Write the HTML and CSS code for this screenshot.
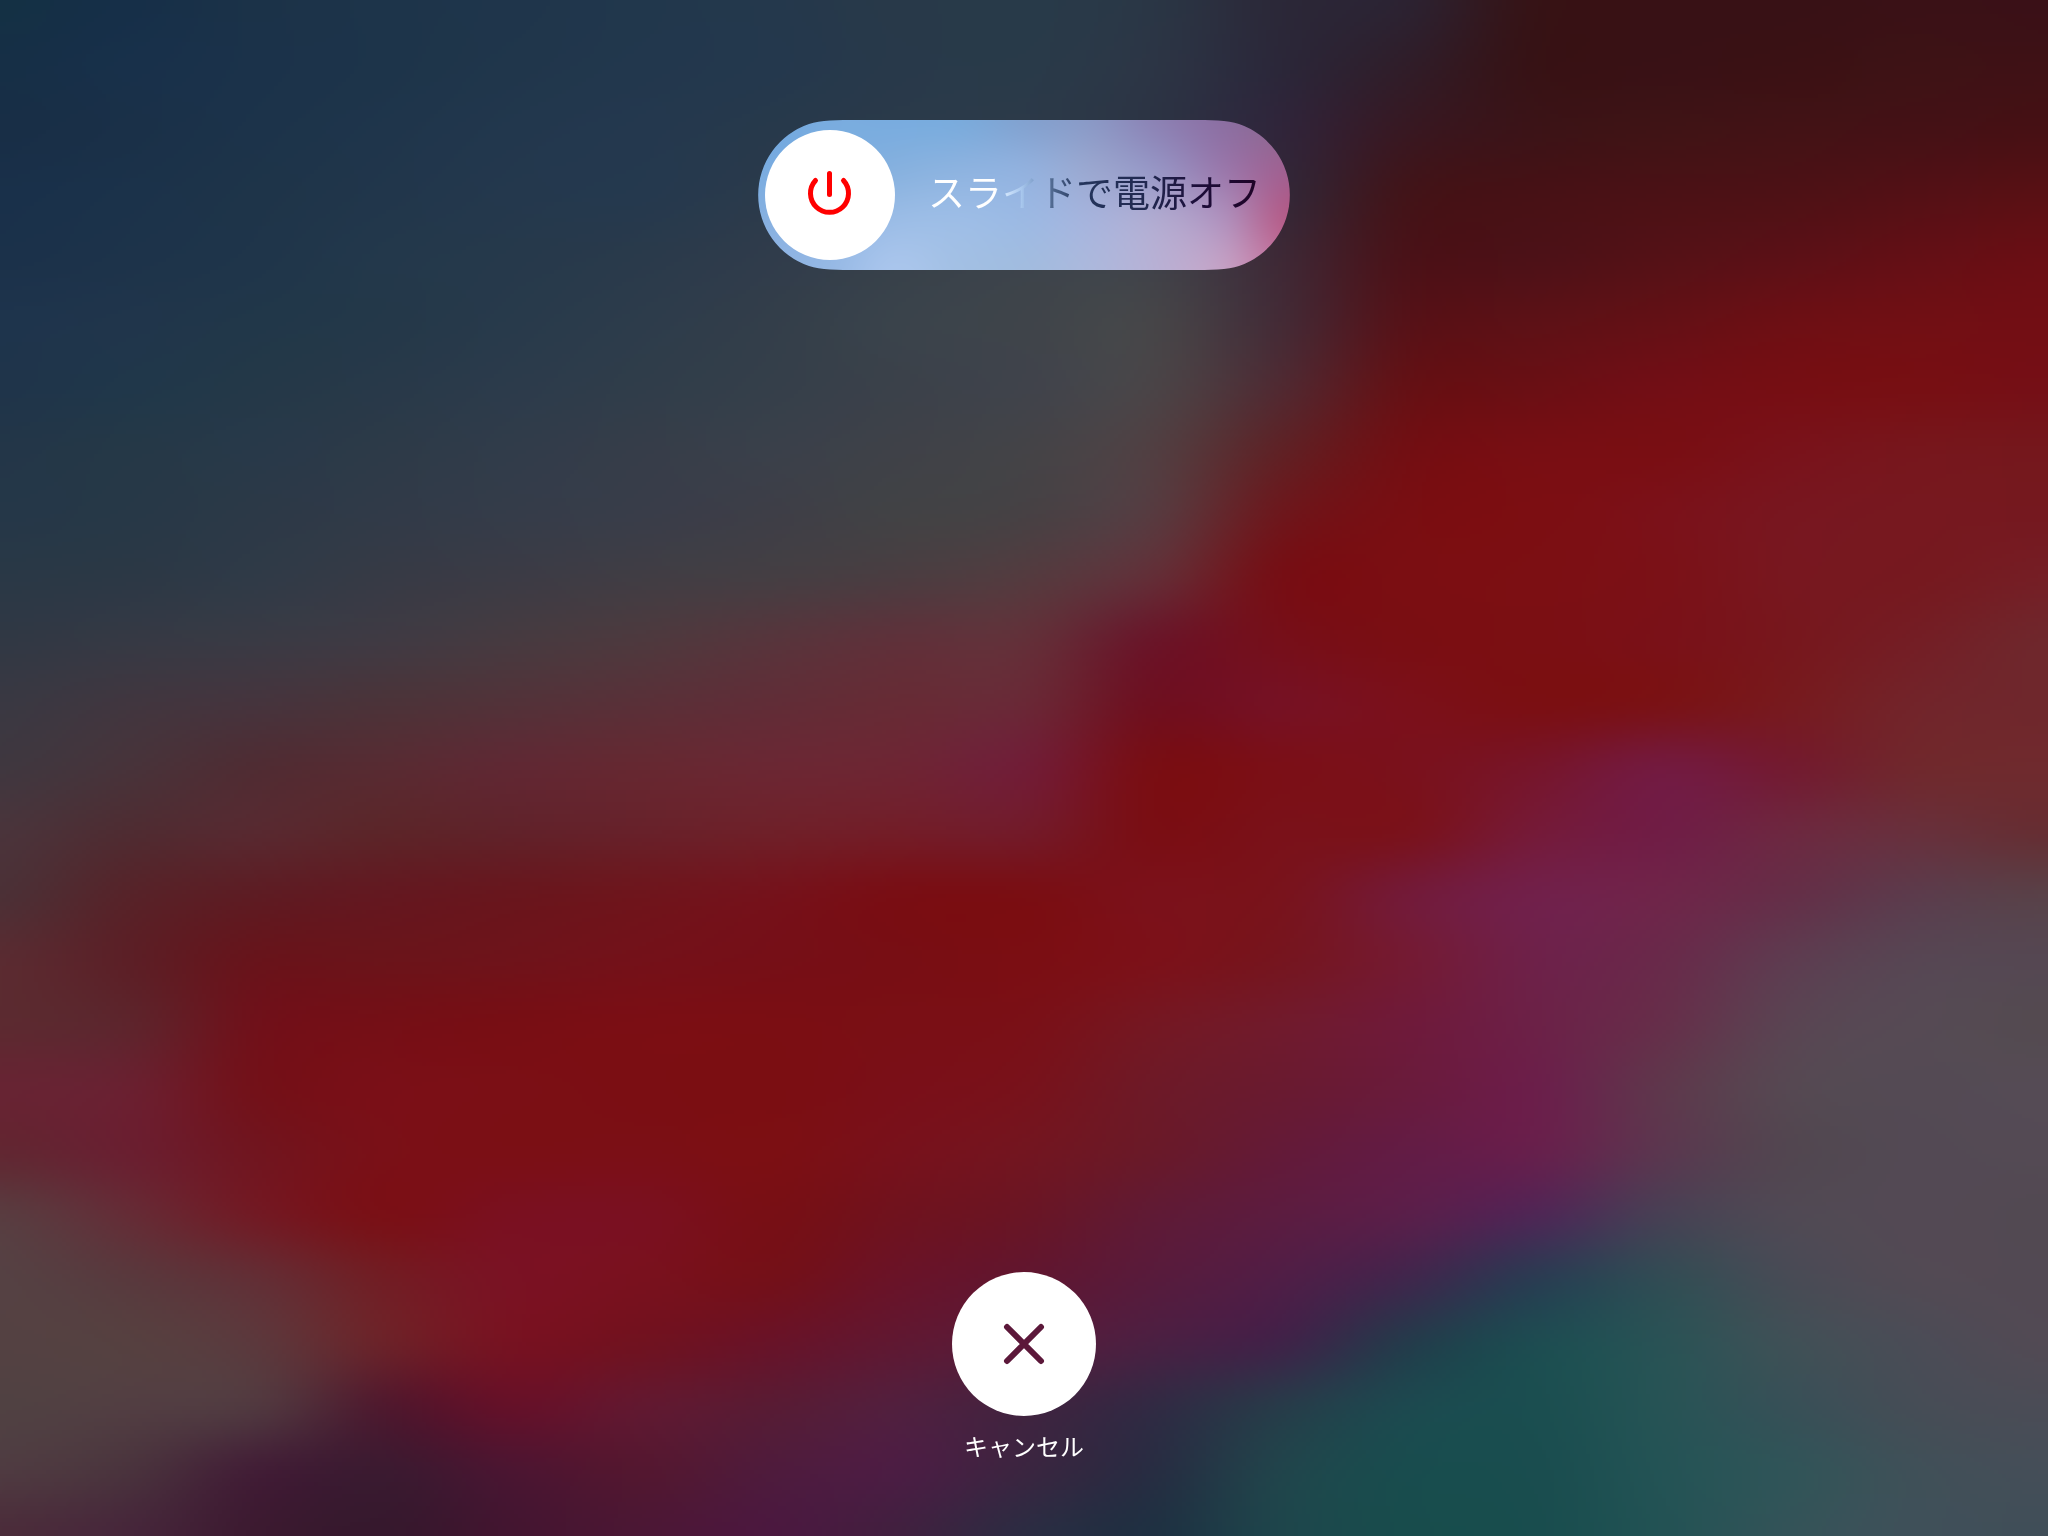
FILE: index.html
```html
<!DOCTYPE html>
<html lang="ja">
<head>
<meta charset="utf-8">
<meta name="viewport" content="width=device-width, initial-scale=1">
<title>電源オフ</title>
<link rel="stylesheet" href="styles.css">
</head>
<body>
<canvas class="wallpaper" id="wallpaper" width="512" height="384" aria-hidden="true"></canvas>
<main class="screen">
  <div class="power-slider">
    <canvas class="power-slider__glass" id="glass" width="532" height="150" aria-hidden="true"></canvas>
    <label class="power-slider__label" for="power-off"><span class="power-slider__text">スライドで電源オフ</span></label>
    <input class="power-slider__input" id="power-off" type="range" min="0" max="100" value="0">
    <svg class="power-slider__icon" viewBox="0 0 130 130" aria-hidden="true">
      <path d="M50.500 50.500A19 19 0 1 0 78.500 50.500M64.500 43.500V64.500"/>
    </svg>
  </div>
  <div class="cancel">
    <button class="cancel__button" id="cancel" type="button" aria-labelledby="cancel-label">
      <svg class="cancel__icon" viewBox="0 0 144 144" aria-hidden="true">
        <path d="M55 55L89 89M89 55L55 89"/>
      </svg>
    </button>
    <label class="cancel__label" id="cancel-label" for="cancel">キャンセル</label>
  </div>
</main>
<script src="mesh.js"></script>
</body>
</html>
```
FILE: styles.css
```css
* {
  box-sizing: border-box;
}

body {
  margin: 0;
  background: #5a1a26;
  color: #fff;
  font-family: "Noto Sans CJK JP", sans-serif;
}

.wallpaper {
  position: fixed;
  inset: 0;
  z-index: -1;
  width: 100%;
  height: 100%;
}

.screen {
  display: flex;
  flex-direction: column;
  align-items: center;
  justify-content: space-between;
  gap: 64px;
  min-height: 100vh;
  padding: 120px 24px 74px;
}

.power-slider {
  display: grid;
  grid-template-columns: 532px;
  grid-template-rows: 150px;
  align-items: center;
}

.power-slider > * {
  grid-area: 1 / 1;
  z-index: 1;
}

.power-slider > .power-slider__glass {
  z-index: 0;
  width: 100%;
  height: 100%;
  clip-path: path("M100 0C80 0 62 0 51 4A75 75 0 0 0 51 146C62 150 80 150 100 150H432C452 150 470 150 481 146A75 75 0 0 0 481 4C470 0 452 0 432 0Z");
}

.power-slider__label {
  padding: 0 0 8px 170px;
  font-size: 37px;
  font-weight: 400;
  line-height: 48px;
  white-space: nowrap;
}

.power-slider__text {
  background: linear-gradient(90deg, #fff 20%, #d3e6fc 23%, #a9c8ee 28%, #7f9fca 32%, #4a6288 38%, #24355c 46%, #212850 66%, #1c0c38 82%, #200426 100%);
  background-clip: text;
  -webkit-background-clip: text;
  color: transparent;
}

.power-slider__input {
  appearance: none;
  -webkit-appearance: none;
  width: 518px;
  height: 130px;
  margin: 0 7px;
  background: transparent;
  cursor: pointer;
}

.power-slider__input::-webkit-slider-thumb {
  appearance: none;
  -webkit-appearance: none;
  width: 130px;
  height: 130px;
  border: 0;
  border-radius: 50%;
  background: #fff;
}

.power-slider__input::-moz-range-thumb {
  width: 130px;
  height: 130px;
  border: 0;
  border-radius: 50%;
  background: #fff;
}

.power-slider__icon {
  width: 130px;
  height: 130px;
  margin-left: 7px;
  fill: none;
  stroke: #f00;
  stroke-width: 5;
  stroke-linecap: round;
  pointer-events: none;
}

.cancel {
  display: flex;
  flex-direction: column;
  align-items: center;
  gap: 15px;
}

.cancel__button {
  width: 144px;
  height: 144px;
  padding: 0;
  border: 0;
  border-radius: 50%;
  background: #fff;
  cursor: pointer;
}

.cancel__icon {
  display: block;
  width: 100%;
  height: 100%;
  fill: none;
  stroke: #5c183a;
  stroke-width: 6;
  stroke-linecap: round;
}

.cancel__label {
  padding-bottom: 1px;
  font-size: 24px;
  font-weight: 400;
  line-height: 30px;
}
```
FILE: mesh.js
```javascript
// Colour meshes: each row lists evenly spaced colours from left to right,
// and the rows are evenly spaced from top to bottom.
const wallpaper = [
  "143044 162f48 1b3248 1d344a 1f354b 21374c 24384c 283949 283a49 2a3645 2b2838 2c2231 361316 381115 381115 3a1116 3a1017",
  "162f46 18304a 1b324a 1d344a 20364b 22374d 24384d 28394a 293a49 2c3545 2b2739 301d29 371215 391115 3b1114 3e1215 3f1115",
  "182e46 1a3048 1c334a 1f354b 22374d 24384e 27394b 2b3a4a 2d3a49 2d3444 30253a 381822 3c1317 401315 431215 451115 471014",
  "19304a 1b324a 1e3449 21364b 24384d 25394e 2b3a4b 323c4a 353f4b 383c48 332838 421419 471115 4b1115 4e1115 541015 591014",
  "1b314a 1d334a 1f354a 23384b 26394b 2a3a4b 303c4b 37404a 3c434b 3f4149 3e2936 4a1218 4d1117 551116 5c1016 640f15 6a0e14",
  "1e344c 20354b 213749 243849 283a4b 2d3c4b 333e4a 3a434b 3f444a 464548 442b36 561218 5d1116 641015 6d0f14 710f14 720e14",
  "1f344a 20374a 243848 283949 2c3b4b 303d4a 353f4a 3b414a 40434b 4a4447 502a32 641115 6a0f14 720e15 760e13 770f13 750f16",
  "233648 253847 283949 2d3a48 313c4a 363d49 3a404a 3f4148 444347 513f42 5f2226 720f13 780e13 790e13 79121a 77161c 75171c",
  "253748 273847 2c3947 313a48 353c49 393d49 3e3e47 424245 474144 573b40 6d181d 790e12 7c0e12 7b1119 78161f 77181f 75181f",
  "2a3846 2c3845 303a47 373a45 3c3b45 413d44 453e43 4b3d41 543b3f 632e37 760f15 7b0e12 7c0f13 7b1117 78171f 76191f 751e25",
  "313844 363944 3a3a44 403a43 473a40 4e393e 57353c 5f313a 633039 6a1629 760f1a 7a0e13 7b0f13 7a1118 77171d 741e25 6f272c",
  "3a3842 41363f 46343d 4c3339 533239 5a3038 612d37 672b35 6a2836 6f1020 761123 7b101a 7b0f13 7a1216 771a1f 72242a 6f272c",
  "40373f 48333a 502c33 582b32 602833 662831 6b2733 6e2533 711d36 790e14 7b0f17 7a111c 77152a 731a3f 731b30 70282d 6f2a2e",
  "4a343b 4f2c32 582930 5c2529 61222a 68212a 6f2029 731d28 731a29 7a0e14 7a1119 7a121c 751a38 701d45 6d2840 68303c 662e33",
  "4c3036 572329 5e1c23 641820 69161d 6f151c 75121b 790e14 7a0e13 7b111a 79131c 731a38 71204a 6f2549 652f48 5c3c4c 594148",
  "5a2b31 5c1f26 68141b 6b141a 6f131a 741119 760f17 780e14 7b0e13 7c1119 76151f 741a33 6e2149 692a4a 5e3c50 574653 554752",
  "5c2a30 5e242c 70111a 750f16 780e14 7b0e14 7b0e13 7a0f15 7a1017 751722 711a2c 6f1a3a 6c2147 662f4a 5a4452 564a54 544a50",
  "672433 6a2030 731119 7a0f17 7b0f15 7b0e13 7b0e12 7a0f18 78121b 6e1927 6a1a30 6a1b3c 6b1f4a 5f374c 564852 544a54 554b55",
  "622732 6a1f30 71151f 7a1017 7b0f15 7b0f16 7c0f13 78111b 731520 6a1929 641a38 631c45 67204c 5b374f 524650 534954 544a54",
  "593c40 652c36 721a24 7a1016 7a1020 7a1020 780f15 70121e 6a1525 601a35 5c1c40 5a1f4a 4f2755 484054 504954 534954 524952",
  "554143 59393d 632e35 721d24 7a1223 79111e 741019 6a1328 611630 581b3c 501e46 40274c 2b3c52 324c54 484b55 524a54 524953",
  "544142 564040 5c383c 6c2229 771221 711220 691328 601832 581c3a 4b2042 402348 253b4b 1e4c51 2a5255 405056 4b4c56 524a54",
  "504142 523e42 51383f 50192e 651129 621830 591b34 521f3e 42233f 322a43 283b49 1d494f 1b4e50 275355 385057 464d56 4b4c56",
  "4f3b41 4a333d 421e36 3c1a30 4c1531 541730 4f1b3c 4c1d43 3b2540 282d42 21444b 194c4e 1a4d4f 245355 315458 405058 454e58",
  "4b2c3a 46263a 3c1a30 36182d 431530 4b1735 4b183f 41203f 2c2c42 1f3142 1e454b 184c4c 194d4e 235254 345358 3f5059 404e58"
];

const glass = [
  "6fa6df 79acdf 79acdf 7aabdc 82a2d0 8a99c6 8c82b4 8c6fa2 8c6a90",
  "7aace0 7cade0 86b1df 8db3e0 92b1de 9aa7d0 9795c4 9a78ab a06090",
  "86b0e0 8cb4e4 9abce6 9dbde6 9cb9e3 a6b3dc b0aad0 b090bc b55c88",
  "90b4e4 95b8e4 a9c5ec a3c0e4 a2bcdf acb8dc b8b0d4 c4a0c4 c4709c"
];

function parse(rows) {
  return rows.map(row => row.split(" ").map(hex => [0, 2, 4].map(i => parseInt(hex.substr(i, 2), 16))));
}

// Catmull-Rom weights and neighbours for position t on an axis of n points
function taps(t, n) {
  const i = Math.min(Math.floor(t), n - 2);
  const f = t - i, f2 = f * f, f3 = f2 * f;
  const weights = [(-f3 + 2 * f2 - f) / 2, (3 * f3 - 5 * f2 + 2) / 2, (-3 * f3 + 4 * f2 + f) / 2, (f3 - f2) / 2];
  return weights.map((w, k) => [Math.max(0, Math.min(n - 1, i + k - 1)), w]);
}

function paint(id, rows) {
  const mesh = parse(rows);
  const canvas = document.getElementById(id);
  const ctx = canvas.getContext("2d");
  const { width, height } = canvas;
  const image = ctx.createImageData(width, height);
  const columns = Array.from({ length: width }, (_, x) => taps(x / (width - 1) * (mesh[0].length - 1), mesh[0].length));
  for (let y = 0; y < height; y++) {
    const lines = taps(y / (height - 1) * (mesh.length - 1), mesh.length);
    for (let x = 0; x < width; x++) {
      const p = (y * width + x) * 4;
      for (let c = 0; c < 3; c++) {
        let sum = 0;
        for (const [j, wy] of lines) for (const [i, wx] of columns[x]) sum += mesh[j][i][c] * wx * wy;
        image.data[p + c] = Math.round(sum);
      }
      image.data[p + 3] = 255;
    }
  }
  ctx.putImageData(image, 0, 0);
}

paint("wallpaper", wallpaper);
paint("glass", glass);
```
